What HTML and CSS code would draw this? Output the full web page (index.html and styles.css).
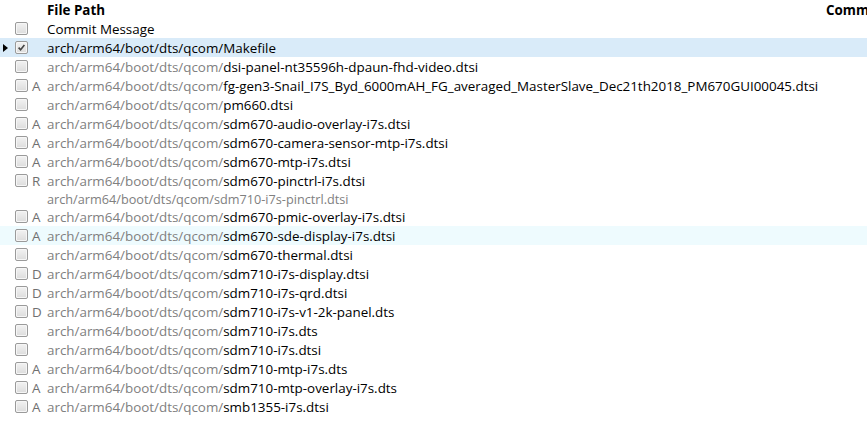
FILE: index.html
```html
<!DOCTYPE html>
<html>
<head>
<meta charset="utf-8">
<link rel="stylesheet" href="styles.css">
</head>
<body>
<div class="list">
  <div class="row head">
    <span class="arrow"></span><span class="cbcell"></span><span class="status"></span>
    <span class="path-col">File Path</span>
    <span class="msg-col">Commit Message</span>
  </div>
  <div class="row"><span class="arrow"></span><span class="cbcell"><span class="cb"></span></span><span class="status"></span><span class="path"><span class="name">Commit Message</span></span></div>
  <div class="row selected"><span class="arrow"><span class="tri"></span></span><span class="cbcell"><span class="cb checked"><svg viewBox="0 0 13 13" width="13" height="13"><path d="M3.6 6.6 L5.6 8.8 L9.4 4" fill="none" stroke="#444" stroke-width="1.6"/></svg></span></span><span class="status"></span><span class="path"><span class="name">arch/arm64/boot/dts/qcom/Makefile</span></span></div>
  <div class="row"><span class="arrow"></span><span class="cbcell"><span class="cb"></span></span><span class="status"></span><span class="path"><span class="dir">arch/arm64/boot/dts/qcom/</span><span class="name">dsi-panel-nt35596h-dpaun-fhd-video.dtsi</span></span></div>
  <div class="row"><span class="arrow"></span><span class="cbcell"><span class="cb"></span></span><span class="status">A</span><span class="path"><span class="dir">arch/arm64/boot/dts/qcom/</span><span class="name">fg-gen3-Snail_I7S_Byd_6000mAH_FG_averaged_MasterSlave_Dec21th2018_PM670GUI00045.dtsi</span></span></div>
  <div class="row"><span class="arrow"></span><span class="cbcell"><span class="cb"></span></span><span class="status"></span><span class="path"><span class="dir">arch/arm64/boot/dts/qcom/</span><span class="name">pm660.dtsi</span></span></div>
  <div class="row"><span class="arrow"></span><span class="cbcell"><span class="cb"></span></span><span class="status">A</span><span class="path"><span class="dir">arch/arm64/boot/dts/qcom/</span><span class="name">sdm670-audio-overlay-i7s.dtsi</span></span></div>
  <div class="row"><span class="arrow"></span><span class="cbcell"><span class="cb"></span></span><span class="status">A</span><span class="path"><span class="dir">arch/arm64/boot/dts/qcom/</span><span class="name">sdm670-camera-sensor-mtp-i7s.dtsi</span></span></div>
  <div class="row"><span class="arrow"></span><span class="cbcell"><span class="cb"></span></span><span class="status">A</span><span class="path"><span class="dir">arch/arm64/boot/dts/qcom/</span><span class="name">sdm670-mtp-i7s.dtsi</span></span></div>
  <div class="row"><span class="arrow"></span><span class="cbcell"><span class="cb"></span></span><span class="status">R</span><span class="path"><span class="dir">arch/arm64/boot/dts/qcom/</span><span class="name">sdm670-pinctrl-i7s.dtsi</span></span></div>
  <div class="row sub"><span class="arrow"></span><span class="cbcell"></span><span class="status"></span><span class="path old">arch/arm64/boot/dts/qcom/sdm710-i7s-pinctrl.dtsi</span></div>
  <div class="row"><span class="arrow"></span><span class="cbcell"><span class="cb"></span></span><span class="status">A</span><span class="path"><span class="dir">arch/arm64/boot/dts/qcom/</span><span class="name">sdm670-pmic-overlay-i7s.dtsi</span></span></div>
  <div class="row hover"><span class="arrow"></span><span class="cbcell"><span class="cb"></span></span><span class="status">A</span><span class="path"><span class="dir">arch/arm64/boot/dts/qcom/</span><span class="name">sdm670-sde-display-i7s.dtsi</span></span></div>
  <div class="row"><span class="arrow"></span><span class="cbcell"><span class="cb"></span></span><span class="status"></span><span class="path"><span class="dir">arch/arm64/boot/dts/qcom/</span><span class="name">sdm670-thermal.dtsi</span></span></div>
  <div class="row"><span class="arrow"></span><span class="cbcell"><span class="cb"></span></span><span class="status">D</span><span class="path"><span class="dir">arch/arm64/boot/dts/qcom/</span><span class="name">sdm710-i7s-display.dtsi</span></span></div>
  <div class="row"><span class="arrow"></span><span class="cbcell"><span class="cb"></span></span><span class="status">D</span><span class="path"><span class="dir">arch/arm64/boot/dts/qcom/</span><span class="name">sdm710-i7s-qrd.dtsi</span></span></div>
  <div class="row"><span class="arrow"></span><span class="cbcell"><span class="cb"></span></span><span class="status">D</span><span class="path"><span class="dir">arch/arm64/boot/dts/qcom/</span><span class="name">sdm710-i7s-v1-2k-panel.dts</span></span></div>
  <div class="row"><span class="arrow"></span><span class="cbcell"><span class="cb"></span></span><span class="status"></span><span class="path"><span class="dir">arch/arm64/boot/dts/qcom/</span><span class="name">sdm710-i7s.dts</span></span></div>
  <div class="row"><span class="arrow"></span><span class="cbcell"><span class="cb"></span></span><span class="status"></span><span class="path"><span class="dir">arch/arm64/boot/dts/qcom/</span><span class="name">sdm710-i7s.dtsi</span></span></div>
  <div class="row"><span class="arrow"></span><span class="cbcell"><span class="cb"></span></span><span class="status">A</span><span class="path"><span class="dir">arch/arm64/boot/dts/qcom/</span><span class="name">sdm710-mtp-i7s.dts</span></span></div>
  <div class="row"><span class="arrow"></span><span class="cbcell"><span class="cb"></span></span><span class="status">A</span><span class="path"><span class="dir">arch/arm64/boot/dts/qcom/</span><span class="name">sdm710-mtp-overlay-i7s.dts</span></span></div>
  <div class="row"><span class="arrow"></span><span class="cbcell"><span class="cb"></span></span><span class="status">A</span><span class="path"><span class="dir">arch/arm64/boot/dts/qcom/</span><span class="name">smb1355-i7s.dtsi</span></span></div>
</div>
</body>
</html>
```
FILE: styles.css
```css
html, body {
  margin: 0;
  padding: 0;
  background: #ffffff;
}
body {
  font-family: "Open Sans", "Noto Sans", "DejaVu Sans", sans-serif;
  font-size: 13.4px;
  color: #000000;
  width: 867px;
  height: 432px;
  overflow: hidden;
}
.list {
  display: flex;
  flex-direction: column;
  width: 867px;
  overflow: hidden;
}
.row {
  display: flex;
  align-items: center;
  height: 19px;
  white-space: nowrap;
}
.row.sub {
  height: 17px;
}
.row.selected {
  background: #d9ebf9;
}
.row.hover {
  background: #eefbfe;
}
.arrow {
  width: 15px;
  flex: none;
  display: flex;
  align-items: center;
  padding-left: 3px;
  box-sizing: border-box;
}
.tri {
  width: 0;
  height: 0;
  border-top: 4px solid transparent;
  border-bottom: 4px solid transparent;
  border-left: 5px solid #000;
}
.cbcell {
  width: 17px;
  flex: none;
  display: flex;
  align-items: center;
}
.cb {
  width: 13px;
  height: 13px;
  box-sizing: border-box;
  border: 1px solid #9a9a9a;
  border-radius: 2px;
  background: linear-gradient(#f2f2f2, #dcdcdc);
  box-shadow: inset 0 0 0 1px #f6f6f6;
  position: relative;
}
.cb svg {
  position: absolute;
  left: -1px;
  top: -1px;
}
.status {
  width: 15px;
  flex: none;
  color: #707070;
}
.path .dir {
  color: #808080;
}
.path .name {
  color: #000;
}
.path.old {
  color: #808080;
  font-size: 12.7px;
}
.head {
  font-weight: bold;
}
.path-col {
  width: 779px;
  flex: none;
}
.msg-col {
  flex: none;
}
```
